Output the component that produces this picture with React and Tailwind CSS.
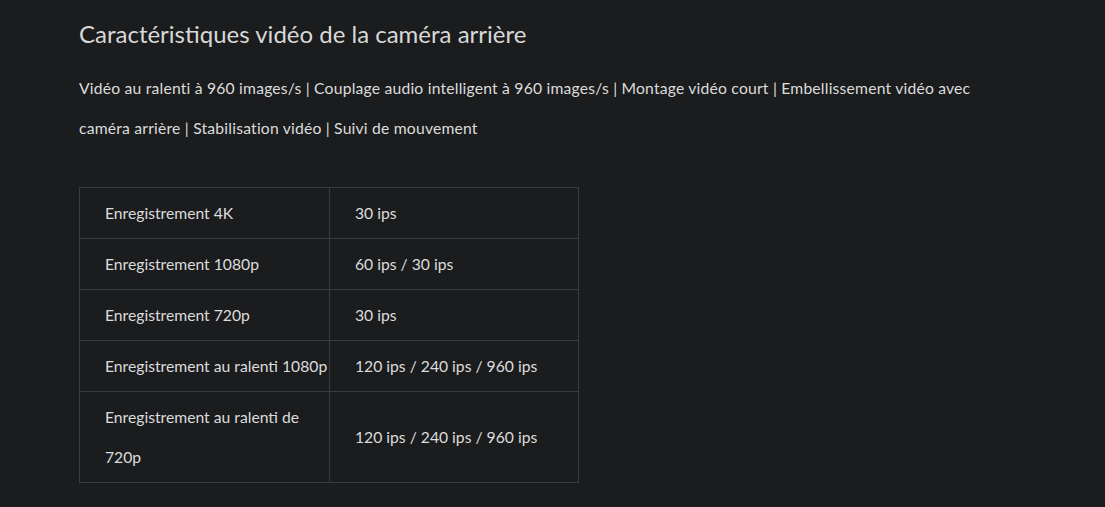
export default function App() {
  const rows = [
    ["Enregistrement 4K", "30 ips"],
    ["Enregistrement 1080p", "60 ips / 30 ips"],
    ["Enregistrement 720p", "30 ips"],
    ["Enregistrement au ralenti 1080p", "120 ips / 240 ips / 960 ips"],
    ["Enregistrement au ralenti de 720p", "120 ips / 240 ips / 960 ips"],
  ];
  return (
    <div className="min-h-[507px] w-full bg-[#1b1c1e] text-[#dcdcdc] px-[79px] pt-[20px]" style={{ fontFamily: "Lato, 'Open Sans', sans-serif" }}>
      <h2 className="text-[24px] leading-[28px] text-[#d8d8d8]">Caractéristiques vidéo de la caméra arrière</h2>
      <p className="mt-[20px] text-[15.7px] leading-[40px] tracking-[0.2px] max-w-[930px]">
        Vidéo au ralenti à 960 images/s | Couplage audio intelligent à 960 images/s | Montage vidéo court | Embellissement vidéo avec caméra arrière | Stabilisation vidéo | Suivi de mouvement
      </p>
      <table className="mt-[39px] w-[499px] border-collapse table-fixed text-[15.7px] leading-[40px]">
        <tbody>
          {rows.map(([a, b], i) => (
            <tr key={i}>
              <td className="w-[250px] border border-[#3a3b3d] pl-[25px] py-[5px] align-middle">{a}</td>
              <td className="w-[249px] border border-[#3a3b3d] pl-[25px] py-[5px] align-middle">{b}</td>
            </tr>
          ))}
        </tbody>
      </table>
    </div>
  );
}
